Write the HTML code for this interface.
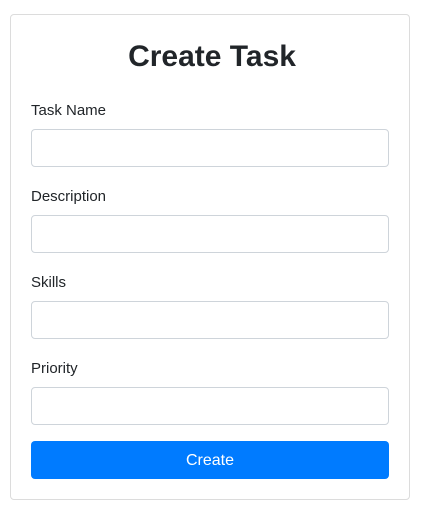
<!DOCTYPE html>
<html><head><style>
body{margin:0;background:#fff;font-family:"Liberation Sans",sans-serif;color:#212529;}
.card{position:absolute;left:10px;top:14px;width:398px;height:484px;border:1px solid #dcdcdc;border-radius:4px;}
h1{position:absolute;left:0;width:100%;top:37px;margin:0;text-align:center;font-size:30px;font-weight:bold;line-height:40px;color:#212529;}
label{position:absolute;left:31px;font-size:15px;line-height:20px;}
.in{position:absolute;left:31px;width:356px;height:36px;border:1px solid #ced4da;border-radius:4px;}
.btn{position:absolute;left:31px;top:441px;width:358px;height:38px;background:#007bff;border-radius:4px;color:#fff;font-size:16px;text-align:center;line-height:40px;}
</style></head><body>
<div class="card"></div>
<h1>Create Task</h1>
<label style="top:101px">Task Name</label><div class="in" style="top:129px"></div>
<label style="top:187px">Description</label><div class="in" style="top:215px"></div>
<label style="top:273px">Skills</label><div class="in" style="top:301px"></div>
<label style="top:359px">Priority</label><div class="in" style="top:387px"></div>
<div class="btn">Create</div>
</body></html>
